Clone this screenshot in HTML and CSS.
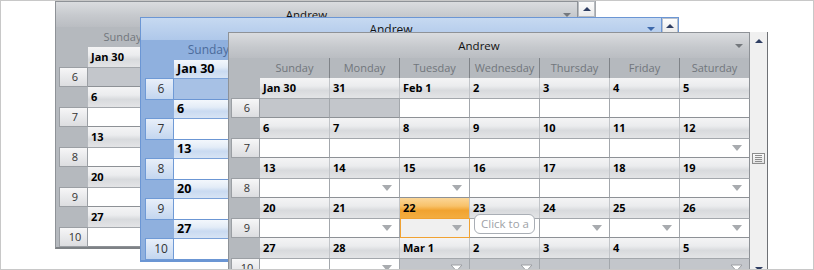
FILE: index.html
```html
<!DOCTYPE html>
<html lang="en">
<head>
    <meta charset="UTF-8">
    <meta name="viewport" content="width=device-width, initial-scale=1.0">
    <title>Scheduler - Month View</title>
    <link rel="stylesheet" href="styles.css">
</head>
<body>
    <div class="stage">
        <!-- back resource: Andrew (silver) -->
        <div class="win silver win-back">
            <div class="win-main">
                <div class="win-title"><span>Andrew</span><i class="dd"></i></div>
                <div class="day-names">
                    <div></div>
                    <div class="dn">Sunday</div>
                    <div class="dn">Monday</div>
                    <div class="dn">Tuesday</div>
                    <div class="dn">Wednesday</div>
                    <div class="dn">Thursday</div>
                    <div class="dn">Friday</div>
                    <div class="dn last">Saturday</div>
                </div>
                <div class="weeks"></div>
            </div>
            <div class="vscroll">
                <div class="sb-btn boxed"><i class="up"></i></div>
            </div>
        </div>

        <!-- middle resource: Andrew (blue, hovered) -->
        <div class="win blue win-mid">
            <div class="win-main">
                <div class="win-title"><span>Andrew</span><i class="dd"></i></div>
                <div class="day-names">
                    <div></div>
                    <div class="dn">Sunday</div>
                    <div class="dn">Monday</div>
                    <div class="dn">Tuesday</div>
                    <div class="dn">Wednesday</div>
                    <div class="dn">Thursday</div>
                    <div class="dn">Friday</div>
                    <div class="dn last">Saturday</div>
                </div>
                <div class="weeks"></div>
            </div>
            <div class="vscroll">
                <div class="sb-btn boxed"><i class="up"></i></div>
            </div>
        </div>

        <!-- front resource: Andrew (silver) -->
        <div class="win silver win-front">
            <div class="win-main">
                <div class="win-title"><span>Andrew</span><i class="dd"></i></div>
                <div class="day-names">
                    <div></div>
                    <div class="dn">Sunday</div>
                    <div class="dn">Monday</div>
                    <div class="dn">Tuesday</div>
                    <div class="dn">Wednesday</div>
                    <div class="dn">Thursday</div>
                    <div class="dn">Friday</div>
                    <div class="dn last">Saturday</div>
                </div>
                <div class="weeks" data-tip="yes"></div>
            </div>
            <div class="vscroll">
                <div class="sb-btn"><i class="up"></i></div>
                <div class="sb-thumb"><i></i><i></i><i></i><i></i></div>
                <div class="sb-btn sb-down"><i class="down"></i></div>
            </div>
        </div>
    </div>

    <script src="script.js"></script>
</body>
</html>
```

FILE: styles.css
```css
* {
    box-sizing: border-box;
}

body {
    margin: 0;
    font-family: "Open Sans", "Segoe UI", sans-serif;
    font-size: 11px;
    color: #000;
}

.stage {
    position: relative;
    width: 814px;
    height: 270px;
    border: 1px solid #c8c8c8;
    background: #fff;
    overflow: hidden;
}

/* themes */
.silver {
    --edge: #8e9297;
    --bg: #b5b9be;
    --title-bg: linear-gradient(#dadcdf, #c6c9cd 55%, #babdc2);
    --dd: #74787d;
    --dn-color: #71767c;
    --dn-sep: #7f8388;
    --head-bg: linear-gradient(#f4f4f5 0%, #ebecee 40%, #d8dadd 62%, #e3e4e6 100%);
    --head-sep: #c1c4c8;
    --cell-line: #a3a7ac;
    --cell-bottom: #8d9196;
    --other: #c3c6cb;
    --wk-bg: linear-gradient(#f6f6f7, #dcdde0);
    --wk-border: #9b9fa4;
}

.blue {
    --edge: #6b96d4;
    --bg: #8fb0de;
    --title-bg: linear-gradient(#c6d9f1, #afc8ea);
    --dd: #3d69ab;
    --dn-color: #4b6b9b;
    --dn-sep: #6f95cc;
    --head-bg: linear-gradient(#f3f7fc 0%, #e3ecf7 40%, #c9daf1 62%, #d7e4f4 100%);
    --head-sep: #aac2e4;
    --cell-line: #7aa1d8;
    --cell-bottom: #6b96d4;
    --other: #a7c1e5;
    --wk-bg: linear-gradient(#e8eff9, #c3d6ef);
    --wk-border: #6f9ad6;
}

/* window placement */
.win {
    position: absolute;
    display: flex;
}

.win-back {
    left: 54px;
    top: 0;
    height: 248px;
    --wk: 32px;
    --days: 490px;
    --title: 25px;
    --hdr: 20px;
    --cnt: 20px;
    --pad: 3px;
}

.win-mid {
    left: 139px;
    top: 16px;
    height: 245px;
    font-size: 12px;
    --wk: 33px;
    --days: 488px;
    --title: 22px;
    --hdr: 18px;
    --cnt: 22px;
    --pad: 4px;
}

.win-front {
    left: 227px;
    top: 31px;
    height: 246px;
    --wk: 31px;
    --days: 490px;
    --title: 25px;
    --hdr: 20px;
    --cnt: 20px;
    --pad: 2px;
}

.win-main {
    display: flex;
    flex-direction: column;
    width: calc(1px + var(--wk) + var(--days));
    border-top: 1px solid var(--edge);
    border-left: 1px solid var(--edge);
    background: var(--bg);
}

.win-back .win-main {
    border-bottom: 2px solid #7e8286;
}

.win-mid .win-main {
    border-bottom: 2px solid var(--edge);
}

.win-title {
    display: flex;
    align-items: center;
    height: var(--title);
    flex-shrink: 0;
    background: var(--title-bg);
    border-right: 1px solid var(--edge);
}

.win-title span {
    flex: 1;
    text-align: center;
    font-size: 11.5px;
    color: #111;
}

.win-mid .win-title span {
    font-size: 12px;
}

.dd {
    width: 0;
    height: 0;
    margin: 0 6px;
    border-left: 4px solid transparent;
    border-right: 4px solid transparent;
    border-top: 4px solid var(--dd);
}

.day-names {
    display: grid;
    grid-template-columns: var(--wk) repeat(7, 1fr);
    height: 20px;
    flex-shrink: 0;
}

.dn {
    text-align: center;
    line-height: 20px;
    color: var(--dn-color);
    border-right: 1px solid var(--dn-sep);
    white-space: nowrap;
    overflow: hidden;
}

.dn.last {
    border-right-color: var(--edge);
}

/* month grid */
.week {
    display: grid;
    grid-template-columns: var(--wk) repeat(7, 1fr);
    grid-template-rows: var(--hdr) var(--cnt);
}

.day-head {
    padding-left: 3px;
    font-weight: 700;
    line-height: var(--hdr);
    background: var(--head-bg);
    border-right: 1px solid var(--head-sep);
    white-space: nowrap;
    overflow: hidden;
}

.win-mid .day-head {
    font-size: 12.5px;
}

.day-head.last {
    border-right-color: var(--edge);
}

.day-head.today {
    background: linear-gradient(#fbd697 0%, #f8c26a 40%, #f1a330 62%, #f3ad40 100%);
}

.wk-num {
    margin-left: var(--pad);
    padding-left: 3px;
    text-align: center;
    line-height: calc(var(--cnt) - 2px);
    color: #333;
    background: var(--wk-bg);
    border: 1px solid var(--wk-border);
}

.day-cell {
    position: relative;
    display: flex;
    align-items: center;
    justify-content: flex-end;
    padding-right: 7px;
    background: #fff;
    border-top: 1px solid var(--cell-line);
    border-bottom: 1px solid var(--cell-bottom);
    border-right: 1px solid var(--cell-line);
}

.day-cell.last {
    border-right-color: var(--edge);
}

.day-cell.other {
    background: var(--other);
}

.day-cell.today {
    background: #f0f0f0;
    border: 1px solid #f0a233;
}

.more {
    width: 0;
    height: 0;
    border-left: 5px solid transparent;
    border-right: 5px solid transparent;
    border-top: 6px solid #a8abaf;
}

.more-open {
    margin-right: -1px;
}

.tip {
    position: absolute;
    left: 4px;
    top: -5px;
    width: 61px;
    height: 20px;
    padding-left: 6px;
    font-size: 11.5px;
    line-height: 18px;
    color: #9ea2a7;
    background: #fff;
    border: 1px solid #a9aeb5;
    border-radius: 6px;
    white-space: nowrap;
    overflow: hidden;
    z-index: 2;
}

/* vertical scrollbars */
.vscroll {
    display: flex;
    flex-direction: column;
    width: 18px;
    background: #f0f0f0;
    border-right: 1px solid #6e7175;
}

.win-back .vscroll {
    background: #fff;
    border-right-color: #a4a7ab;
}

.win-mid .vscroll {
    width: 17px;
    background: #f7f9fc;
    border-top: 1px solid var(--edge);
    border-right-color: var(--edge);
}

.sb-btn {
    display: flex;
    align-items: center;
    justify-content: center;
    height: 18px;
    flex-shrink: 0;
}

.sb-btn.boxed {
    height: 16px;
    border: 1px solid #b7bbc0;
    background: linear-gradient(#fdfdfd, #ebebeb);
}

.win-mid .sb-btn.boxed {
    height: 15px;
    border-color: #b8c1ce;
}

.sb-down {
    margin-top: auto;
}

.up {
    width: 0;
    height: 0;
    border-left: 4px solid transparent;
    border-right: 4px solid transparent;
    border-bottom: 4px solid #2f3e62;
}

.down {
    width: 0;
    height: 0;
    border-left: 4px solid transparent;
    border-right: 4px solid transparent;
    border-top: 4px solid #2f3e62;
}

.sb-thumb {
    display: flex;
    flex-direction: column;
    justify-content: center;
    gap: 1px;
    height: 11px;
    margin: 103px 2px 0;
    padding: 0 2px;
    border: 1px solid #8d8d8d;
    background: linear-gradient(#fbfbfb, #e2e2e2);
}

.sb-thumb i {
    height: 1px;
    background: #8d8d8d;
}
```

FILE: script.js
```js
const weeks = [
    { num: 6, days: ['Jan 30', '31', 'Feb 1', '2', '3', '4', '5'], other: [0, 1] },
    { num: 7, days: ['6', '7', '8', '9', '10', '11', '12'], more: [6] },
    { num: 8, days: ['13', '14', '15', '16', '17', '18', '19'], more: [1, 2, 6] },
    { num: 9, days: ['20', '21', '22', '23', '24', '25', '26'], more: [1, 2, 4, 5, 6], today: 2, tip: 3 },
    { num: 10, days: ['27', '28', 'Mar 1', '2', '3', '4', '5'], other: [2, 3, 4, 5, 6], more: [1], moreOpen: [2, 3, 6] }
];

const openArrow = '<svg class="more-open" width="13" height="8" viewBox="0 0 13 8">' +
    '<polygon points="1,1 12,1 6.5,7" fill="#fff" stroke="#9c9fa3"/></svg>';

function has(list, i) {
    return Array.isArray(list) && list.includes(i);
}

function buildWeeks(container) {
    const withTip = container.dataset.tip === 'yes';

    weeks.forEach(week => {
        const row = document.createElement('div');
        row.className = 'week';

        let html = '<div class="wk-gap"></div>';
        week.days.forEach((day, i) => {
            let cls = 'day-head';
            if (week.today === i) cls += ' today';
            if (i === 6) cls += ' last';
            html += `<div class="${cls}">${day}</div>`;
        });

        html += `<div class="wk-num">${week.num}</div>`;
        week.days.forEach((day, i) => {
            let cls = 'day-cell';
            if (has(week.other, i)) cls += ' other';
            if (week.today === i) cls += ' today';
            if (i === 6) cls += ' last';

            let inner = '';
            if (withTip && week.tip === i) inner += '<div class="tip">Click to a</div>';
            if (has(week.more, i)) inner += '<i class="more"></i>';
            if (has(week.moreOpen, i)) inner += openArrow;
            html += `<div class="${cls}">${inner}</div>`;
        });

        row.innerHTML = html;
        container.appendChild(row);
    });
}

document.querySelectorAll('.weeks').forEach(buildWeeks);
```
